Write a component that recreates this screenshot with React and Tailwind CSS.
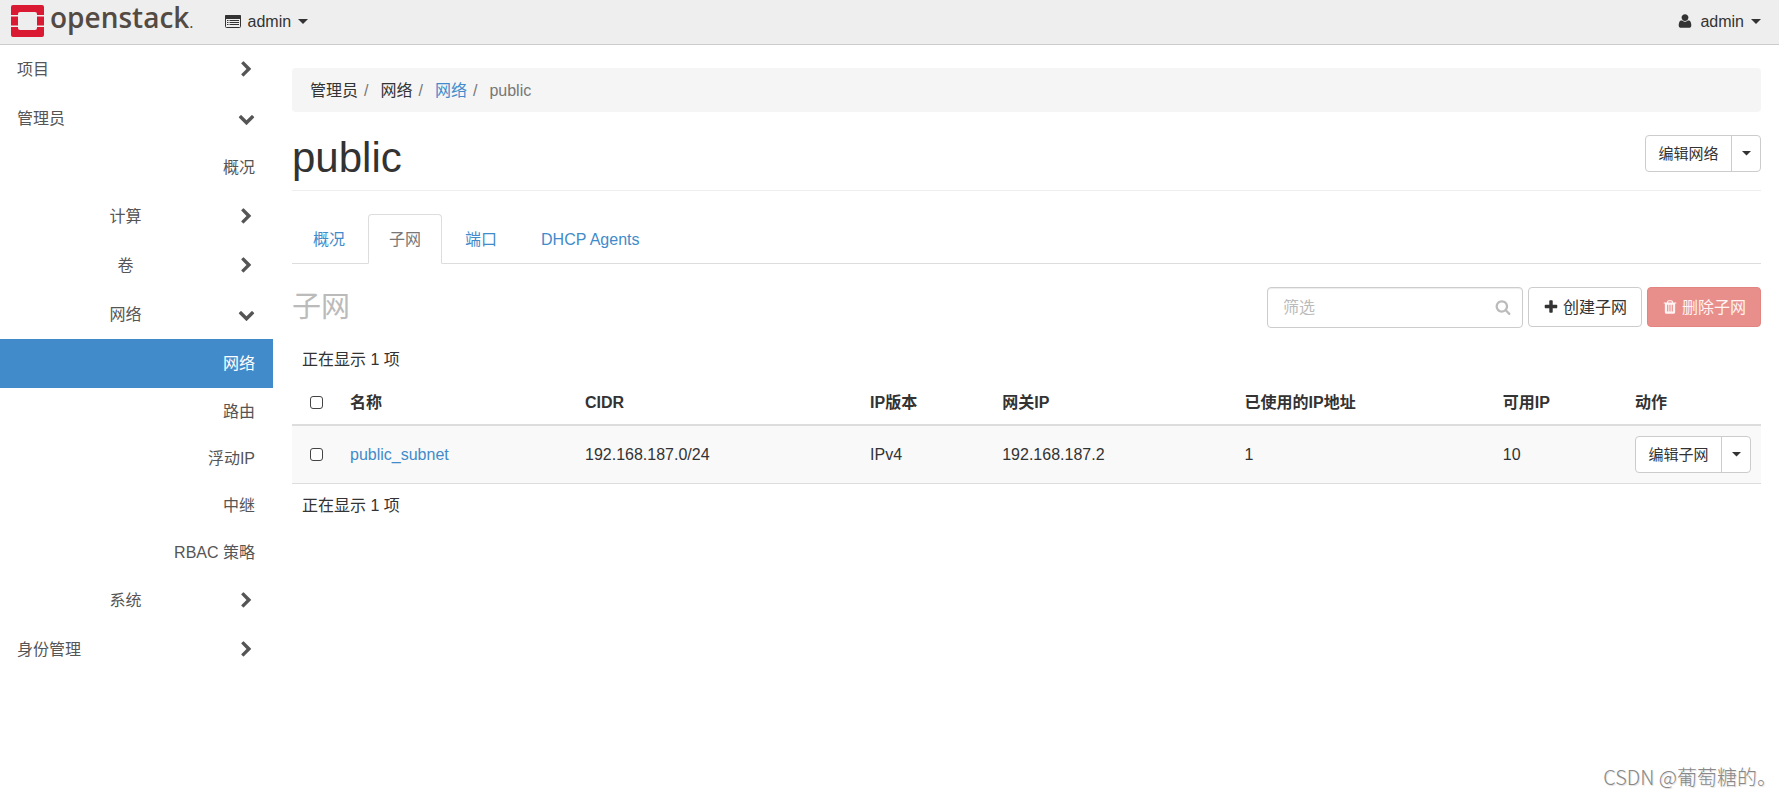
import React from "react";

const PATHS = {
  chevronRight:
    "M1363 877l-742 742q-19 19-45 19t-45-19l-166-166q-19-19-19-45t19-45l531-531-531-531q-19-19-19-45t19-45l166-166q19-19 45-19t45 19l742 742q19 19 19 45t-19 45z",
  chevronDown:
    "M1683 808l-742 741q-19 19-45 19t-45-19l-742-741q-19-19-19-45.5t19-45.5l166-165q19-19 45-19t45 19l531 531 531-531q19-19 45-19t45 19l166 165q19 19 19 45.5t-19 45.5z",
  search:
    "M1216 832q0-185-131.5-316.5t-316.5-131.5-316.5 131.5-131.5 316.5 131.5 316.5 316.5 131.5 316.5-131.5 131.5-316.5zm512 832q0 52-38 90t-90 38q-54 0-90-38l-343-342q-179 124-399 124-143 0-273.5-55.5t-225-150-150-225-55.5-273.5 55.5-273.5 150-225 225-150 273.5-55.5 273.5 55.5 225 150 150 225 55.5 273.5q0 220-124 399l343 343q37 37 37 90z",
  plus:
    "M1600 736v192q0 40-28 68t-68 28h-416v416q0 40-28 68t-68 28h-192q-40 0-68-28t-28-68v-416h-416q-40 0-68-28t-28-68v-192q0-40 28-68t68-28h416v-416q0-40 28-68t68-28h192q40 0 68 28t28 68v416h416q40 0 68 28t28 68z",
  trash:
    "M704 1376v-704q0-14-9-23t-23-9h-64q-14 0-23 9t-9 23v704q0 14 9 23t23 9h64q14 0 23-9t9-23zm256 0v-704q0-14-9-23t-23-9h-64q-14 0-23 9t-9 23v704q0 14 9 23t23 9h64q14 0 23-9t9-23zm256 0v-704q0-14-9-23t-23-9h-64q-14 0-23 9t-9 23v704q0 14 9 23t23 9h64q14 0 23-9t9-23zm-544-992h448l-48-117q-7-9-17-11h-317q-10 2-17 11zm928 32v64q0 14-9 23t-23 9h-96v948q0 83-47 143.5t-113 60.5h-832q-66 0-113-58.5t-47-141.5v-952h-96q-14 0-23-9t-9-23v-64q0-14 9-23t23-9h309l70-167q15-37 54-63t79-26h320q40 0 79 26t54 63l70 167h309q14 0 23 9t9 23z",
  user:
    "M1600 1405q0 120-73 189.5t-194 69.5h-874q-121 0-194-69.5t-73-189.5q0-53 3.5-103.5t14-109 26.5-108.5 43-97.5 62-81 85.5-53.5 111.5-20q9 0 42 21.5t74.5 48 108 48 133.5 21.5 133.5-21.5 108-48 74.5-48 42-21.5q61 0 111.5 20t85.5 53.5 62 81 43 97.5 26.5 108.5 14 109 3.5 103.5zm-320-893q0 159-112.5 271.5t-271.5 112.5-271.5-112.5-112.5-271.5 112.5-271.5 271.5-112.5 271.5 112.5 112.5 271.5z",
};

function Icon({ name, className = "size-4" }) {
  return (
    <svg viewBox="0 0 1792 1792" fill="currentColor" aria-hidden="true" className={`shrink-0 ${className}`}>
      <path d={PATHS[name]} />
    </svg>
  );
}

function Caret({ className = "w-[10px]" }) {
  return (
    <svg viewBox="0 0 10 5" fill="currentColor" aria-hidden="true" className={`shrink-0 ${className}`}>
      <path d="M0 0h10l-5 5z" />
    </svg>
  );
}

function ListIcon() {
  return (
    <svg viewBox="0 0 16 13" aria-hidden="true" className="h-[13px] w-4 shrink-0">
      <rect x="0.5" y="0.5" width="15" height="12" rx="1" fill="none" stroke="currentColor" />
      <path d="M0 1q0-1 1-1h14q1 0 1 1v3H0z" fill="currentColor" />
      <path d="M2 5.5h1.5M4.5 5.5H14M2 7.5h1.5M4.5 7.5H14M2 9.5h1.5M4.5 9.5H14" stroke="currentColor" />
    </svg>
  );
}

function Logo() {
  return (
    <a href="#home" className="flex items-center gap-[6px]">
      <svg viewBox="0 0 33 32" aria-hidden="true" className="h-8 w-[33px]">
        <path
          fill="#da1a32"
          d="M2 0h29a2 2 0 0 1 2 2v8h-7V9a2 2 0 0 0-2-2H9a2 2 0 0 0-2 2v1H0V2a2 2 0 0 1 2-2zM0 11.5h7v9H0zM26 11.5h7v9h-7zM0 22h7v1a2 2 0 0 0 2 2h15a2 2 0 0 0 2-2v-1h7v8a2 2 0 0 1-2 2H2a2 2 0 0 1-2-2z"
        />
      </svg>
      <span className="flex items-baseline pb-1 font-['Open_Sans',sans-serif] text-[28px] leading-7 font-semibold text-[#534a43]">
        openstack<span className="text-[16px] font-normal">.</span>
      </span>
    </a>
  );
}

const NAV = [
  { label: "项目", level: 1 },
  { label: "管理员", level: 1, open: true },
  { label: "概况", level: 3, tall: true },
  { label: "计算", level: 2 },
  { label: "卷", level: 2 },
  { label: "网络", level: 2, open: true },
  { label: "网络", level: 3, tall: true, active: true },
  { label: "路由", level: 3 },
  { label: "浮动IP", level: 3 },
  { label: "中继", level: 3 },
  { label: "RBAC 策略", level: 3 },
  { label: "系统", level: 2 },
  { label: "身份管理", level: 1 },
];

function NavItem({ item }) {
  if (item.level === 3) {
    return (
      <a
        href="#panel"
        className={`flex items-center justify-end px-[18px] ${item.tall ? "h-[49px]" : "h-[47px]"} ${
          item.active ? "bg-[#428bca] text-white" : ""
        }`}
      >
        {item.label}
      </a>
    );
  }
  return (
    <button type="button" className="flex h-[49px] w-full items-center gap-1 pr-[18px] pl-[17px]">
      <span className={`flex-1 ${item.level === 1 ? "text-left" : "text-center"}`}>{item.label}</span>
      <Icon name={item.open ? "chevronDown" : "chevronRight"} className="size-[17px]" />
    </button>
  );
}

function SplitButton({ label }) {
  return (
    <div className="flex h-[37px] w-[116px] rounded border border-[#ccc] bg-white text-[15px]">
      <button type="button" className="flex-1 whitespace-nowrap">
        {label}
      </button>
      <button type="button" aria-label="更多操作" className="flex w-[29px] items-center justify-center border-l border-[#ccc]">
        <Caret className="w-[9px]" />
      </button>
    </div>
  );
}

function Check({ label }) {
  return (
    <input
      type="checkbox"
      aria-label={label}
      className="mx-auto block size-[13px] appearance-none rounded-[3px] border border-[#444] bg-white checked:bg-[#428bca]"
    />
  );
}

const TABS = ["概况", "子网", "端口", "DHCP Agents"];

const COLUMNS = [
  { label: "名称", width: "w-[16%]" },
  { label: "CIDR", width: "w-[19.4%]" },
  { label: "IP版本", width: "w-[9%]" },
  { label: "网关IP", width: "w-[16.5%]" },
  { label: "已使用的IP地址", width: "" },
  { label: "可用IP", width: "w-[9%]" },
  { label: "动作", width: "w-[136px]" },
];

function Separator() {
  return <span className="mr-3 ml-1.5 text-[#777]">/</span>;
}

export default function App() {
  return (
    <div className="relative min-h-screen bg-white font-['Liberation_Sans','Noto_Sans_CJK_SC',sans-serif] text-[16px] leading-[23px] text-[#333]">
      <header className="flex h-[45px] items-center justify-between border-b border-[#ccc] bg-[#eee] pr-[18px] pb-[2px] pl-[11px]">
        <div className="flex items-center gap-[31px]">
          <Logo />
          <button type="button" className="flex items-center gap-[7px]">
            <ListIcon />
            admin
            <Caret />
          </button>
        </div>
        <button type="button" className="flex items-center gap-[7px]">
          <Icon name="user" />
          admin
          <Caret />
        </button>
      </header>

      <div className="flex">
        <nav className="w-[273px] shrink-0 text-[#555]">
          {NAV.map((item, i) => (
            <NavItem key={i} item={item} />
          ))}
        </nav>

        <main className="min-w-0 flex-1 pt-[23px] pr-[18px] pl-[19px]">
          <ol className="flex h-11 items-center rounded bg-[#f5f5f5] px-[18px]">
            <li>
              管理员
              <Separator />
            </li>
            <li>
              网络
              <Separator />
            </li>
            <li>
              <a href="#networks" className="text-[#428bca]">
                网络
              </a>
              <Separator />
            </li>
            <li className="text-[#777]">public</li>
          </ol>

          <div className="mt-[23px] flex items-start justify-between border-b border-[#eee] pb-[10px]">
            <h1 className="text-[42px] leading-[45px]">public</h1>
            <SplitButton label="编辑网络" />
          </div>

          <div role="tablist" className="mt-[23px] flex gap-0.5 border-b border-[#ddd]">
            {TABS.map((tab) => (
              <button
                key={tab}
                type="button"
                role="tab"
                aria-selected={tab === "子网"}
                className={`-mb-px h-[50px] rounded-t border px-5 ${
                  tab === "子网"
                    ? "border-[#ddd] border-b-white bg-white text-[#777]"
                    : "border-transparent text-[#428bca]"
                }`}
              >
                {tab}
              </button>
            ))}
          </div>

          <div className="mt-[23px] flex items-start justify-between">
            <h2 className="text-[29px] leading-[41px] text-[#bbb]">子网</h2>
            <div className="flex items-start gap-[5px]">
              <div className="relative">
                <input
                  type="text"
                  aria-label="筛选"
                  placeholder="筛选"
                  className="h-[41px] w-64 rounded border border-[#ccc] pr-10 pl-[15px] shadow-[inset_0_1px_1px_rgba(0,0,0,0.075)] placeholder:text-[#bbb]"
                />
                <Icon name="search" className="absolute top-3 right-3 size-4 text-[#bbb]" />
              </div>
              <button
                type="button"
                className="flex h-10 items-center gap-1 rounded border border-[#ccc] px-[14px]"
              >
                <Icon name="plus" />
                创建子网
              </button>
              <button
                type="button"
                disabled
                className="flex h-10 items-center gap-1 rounded border border-[#e38481] bg-[#e88f8c] px-[14px] text-[#fff4f3]"
              >
                <Icon name="trash" />
                删除子网
              </button>
            </div>
          </div>

          <div className="mt-[10px] px-[10px] py-[10px]">正在显示 1 项</div>
          <table className="w-full table-fixed border-collapse text-left">
            <thead>
              <tr className="h-11 border-b-2 border-[#ddd]">
                <th className="w-12">
                  <Check label="全选" />
                </th>
                {COLUMNS.map((c) => (
                  <th key={c.label} className={`px-[10px] font-bold ${c.width}`}>
                    {c.label}
                  </th>
                ))}
              </tr>
            </thead>
            <tbody>
              <tr className="h-[58px] border-b border-[#ddd] bg-[#f9f9f9]">
                <td>
                  <Check label="选择 public_subnet" />
                </td>
                <td className="px-[10px]">
                  <a href="#subnet" className="text-[#428bca]">
                    public_subnet
                  </a>
                </td>
                <td className="px-[10px]">192.168.187.0/24</td>
                <td className="px-[10px]">IPv4</td>
                <td className="px-[10px]">192.168.187.2</td>
                <td className="px-[10px]">1</td>
                <td className="px-[10px]">10</td>
                <td className="px-[10px]">
                  <SplitButton label="编辑子网" />
                </td>
              </tr>
            </tbody>
          </table>
          <div className="px-[10px] py-[10px]">正在显示 1 项</div>
        </main>
      </div>

      <div className="absolute right-[2px] bottom-[7px] font-['Noto_Sans_CJK_SC',sans-serif] text-[20px] leading-6 font-light text-[#888] [text-shadow:1px_1px_1px_#ddd]">
        CSDN @葡萄糖的。
      </div>
    </div>
  );
}
